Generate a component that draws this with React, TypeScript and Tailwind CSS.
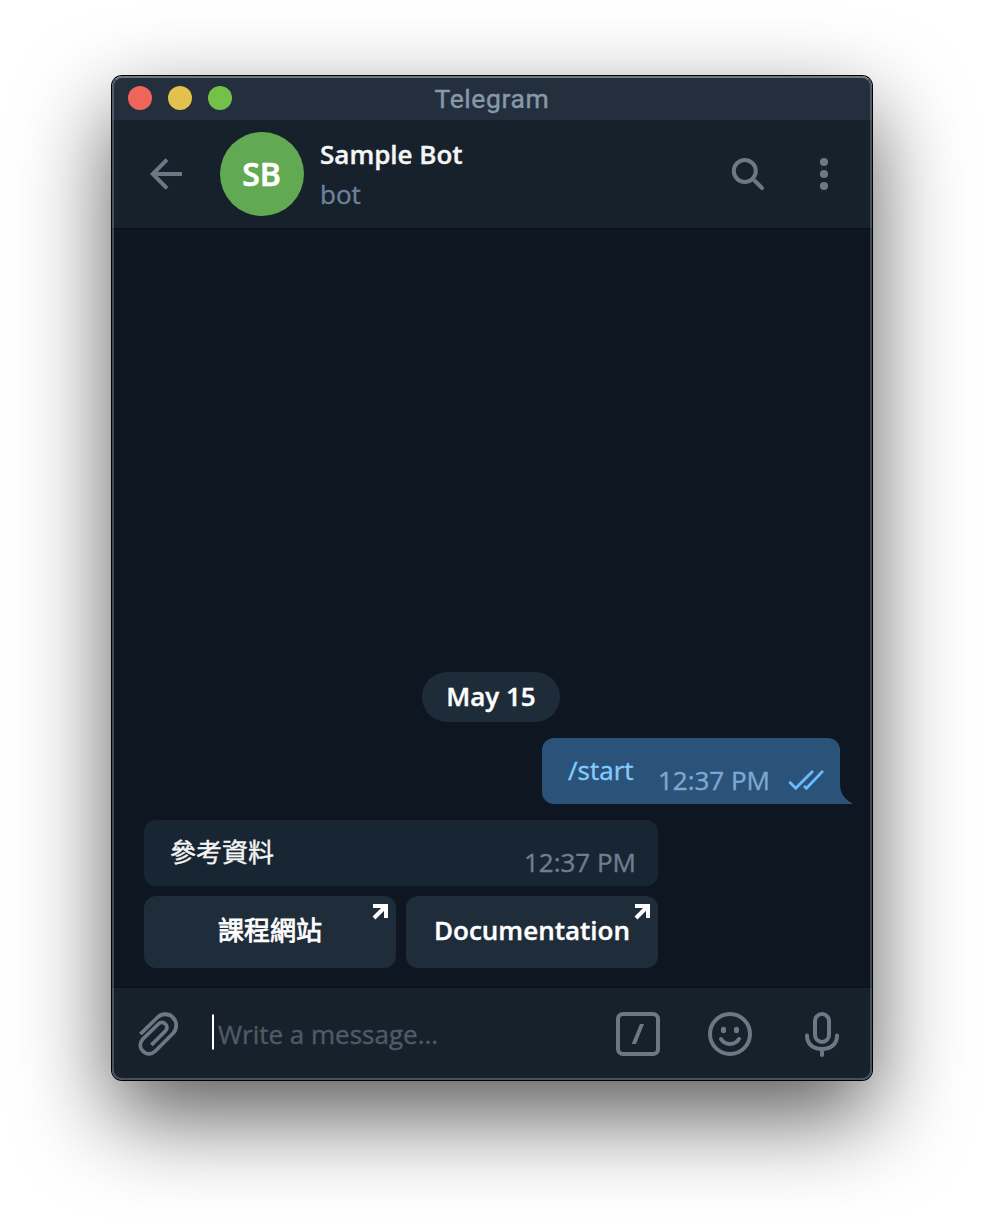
import React from "react";

const uiFont =
  "font-['Open_Sans','Noto_Sans_CJK_TC',sans-serif] [-webkit-text-stroke:0.4px_currentColor]";

function TitleBar() {
  return (
    <div className="grid h-[44px] grid-cols-[1fr_auto_1fr] items-center bg-[#242f3d] px-4">
      <div className="flex gap-4">
        <span className="size-6 rounded-full bg-[#f0655b]" />
        <span className="size-6 rounded-full bg-[#e3c14d]" />
        <span className="size-6 rounded-full bg-[#74c14a]" />
      </div>
      <div className="h-[44px] font-['Roboto',sans-serif] text-[26.5px] leading-[46px] tracking-[0.6px] text-[#8599ab]">
        Telegram
      </div>
      <div />
    </div>
  );
}

function ChatHeader() {
  return (
    <div className="flex h-[108px] items-center bg-[#17212b] pl-[36px] pr-[40px]">
      <svg className="h-9 w-9 shrink-0" viewBox="0 0 36 36" fill="none" stroke="#6c7883" strokeWidth="4">
        <path d="M34 18H5M19 3.600 4.800 18 19 32.400" />
      </svg>
      <div className="ml-9 flex size-[84px] items-center justify-center rounded-full bg-[#62a953] pr-px text-[32px] font-semibold text-white [-webkit-text-stroke:0.7px_currentColor]">
        SB
      </div>
      <div className="ml-4 flex flex-1 flex-col">
        <div className="text-[26px] leading-[40px] font-semibold text-[#f5f5f5]">Sample Bot</div>
        <div className="text-[26px] leading-[40px] text-[#6d839b]">bot</div>
      </div>
      <svg className="h-9 w-9" viewBox="0 0 36 36" fill="none" stroke="#6c7883" strokeWidth="4">
        <circle cx="14.800" cy="15" r="11" />
        <path d="m25 25 7 7" strokeLinecap="round" />
      </svg>
      <svg className="ml-[50px] h-9 w-4" viewBox="0 0 16 36" fill="#6c7883">
        <circle cx="8" cy="6" r="4.1" />
        <circle cx="8" cy="18" r="4.1" />
        <circle cx="8" cy="30" r="4.1" />
      </svg>
    </div>
  );
}

function LinkButton({ label, weight }: { label: string; weight: string }) {
  return (
    <button className={`relative h-[72px] w-[252px] rounded-xl bg-[#1f2c39] pb-1 text-[26px] leading-[68px] text-white ${weight}`}>
      {label}
      <svg className="absolute top-2 right-2 size-4" viewBox="0 0 16 16" fill="none" stroke="white" strokeWidth="4">
        <path d="M1 2H14V14M14 2 2 14" />
      </svg>
    </button>
  );
}

function Messages() {
  return (
    <div className="flex h-[760px] flex-col justify-end border-y-2 border-[#0b131b] bg-[#0e1621] pr-8 pb-[18px] pl-8">
      <div className="-ml-[2px] mb-4 h-[50px] w-[138px] self-center rounded-full bg-[#1e2c3a] text-center text-[26px] leading-[49px] font-semibold text-white">
        May 15
      </div>
      <div className="relative mb-4 flex h-[66px] w-[298px] self-end rounded-xl rounded-br-none bg-[#2b5278] pl-[26px] text-[26px]">
        <span className="leading-[65px] text-[#83caff]">/start</span>
        <span className="ml-auto mr-[16px] pt-[10px] leading-[65px] text-[#7da8d3]">12:37 PM</span>
        <svg className="mt-[30px] mr-[14px] h-6 w-[40px]" viewBox="0 0 40 24" fill="none" stroke="#6bbcff" strokeWidth="2.8">
          <path d="m3.300 13.800 6.400 6.400L27 2.900M18 18l2.500 2.200L37 2.900" />
        </svg>
        <svg className="absolute bottom-0 left-full h-5 w-3" viewBox="0 0 12 20" fill="#2b5278">
          <path d="M0 0C0 9 5 16 12 19v1H0Z" />
        </svg>
      </div>
      <div className="mb-[10px] flex h-[66px] w-[514px] justify-between rounded-xl bg-[#182533] pr-[22px] pl-[26px] text-[26px]">
        <span className="leading-[64px] text-[#f5f5f5]">參考資料</span>
        <span className="pt-[10px] leading-[65px] text-[#6d7f8f]">12:37 PM</span>
      </div>
      <div className="flex gap-[10px]">
        <LinkButton label="課程網站" weight="font-normal [-webkit-text-stroke:0.8px_currentColor]" />
        <LinkButton label="Documentation" weight="font-semibold" />
      </div>
    </div>
  );
}

function Composer() {
  return (
    <div className="flex h-[92px] items-center bg-[#17212b] pl-6 pr-8">
      <svg className="h-12 w-11" viewBox="135.6 1010 44 48" fill="none" stroke="#6c7883" strokeWidth="3.8">
        <path d="M140 1034 157 1017.500C161 1013.500 168 1013 172 1017C177 1021.500 177 1029 172.500 1033.500L155 1051C151.500 1054.500 146 1055 142.500 1051C139 1047.500 139 1043 142.500 1039L158 1024C160 1022 163 1022 165 1024C167 1026 167 1029 165 1031L151 1045" />
      </svg>
      <div className="ml-8 h-[35px] w-[2px] -translate-y-[2.500px] bg-white" />
      <div className="ml-[4px] flex-1 text-[26px] leading-[92px] text-[#4d5b68]">Write a message...</div>
      <svg className="h-12 w-12" viewBox="0 0 48 48" fill="none" stroke="#6c7883" strokeWidth="4">
        <rect x="4" y="4" width="40" height="40" rx="5" />
        <path d="M17.700 34H22L30 14h-4Z" fill="#6c7883" stroke="none" />
      </svg>
      <svg className="ml-11 h-12 w-12" viewBox="0 0 48 48" fill="none" stroke="#6c7883" strokeWidth="4">
        <circle cx="24" cy="24" r="20" />
        <path d="M15 29c4 6.500 14 6.500 18 0" strokeLinecap="round" />
        <ellipse cx="17.500" cy="20" rx="2.600" ry="3.200" fill="#6c7883" stroke="none" />
        <ellipse cx="30.500" cy="20" rx="2.600" ry="3.200" fill="#6c7883" stroke="none" />
      </svg>
      <svg className="ml-[50px] h-12 w-9" viewBox="0 0 36 48" fill="none" stroke="#6c7883" strokeWidth="4">
        <rect x="11" y="4" width="14" height="28" rx="7" />
        <path d="M3 25.500C3 34 9 39 18 39S33 34 33 25.500M18 39v6" strokeLinecap="round" />
      </svg>
    </div>
  );
}

export default function App() {
  return (
    <main className={`h-[1228px] w-[984px] overflow-hidden bg-white pt-[76px] pl-[112px] ${uiFont}`}>
      <div className="h-[1004px] w-[760px] rounded-[10px] shadow-[0_0_0_1px_#000,0_36px_90px_rgba(0,0,0,0.65)]">
        <div className="grid h-full w-full grid-rows-[44px_108px_760px_92px] overflow-hidden rounded-[10px]">
          <div className="col-start-1 row-start-1"><TitleBar /></div>
          <div className="col-start-1 row-start-2"><ChatHeader /></div>
          <div className="col-start-1 row-start-3"><Messages /></div>
          <div className="col-start-1 row-start-4"><Composer /></div>
          <div className="pointer-events-none z-10 col-start-1 row-start-1 row-end-5 rounded-[10px] border-2 border-white/22 border-t-white/35" />
        </div>
      </div>
    </main>
  );
}
